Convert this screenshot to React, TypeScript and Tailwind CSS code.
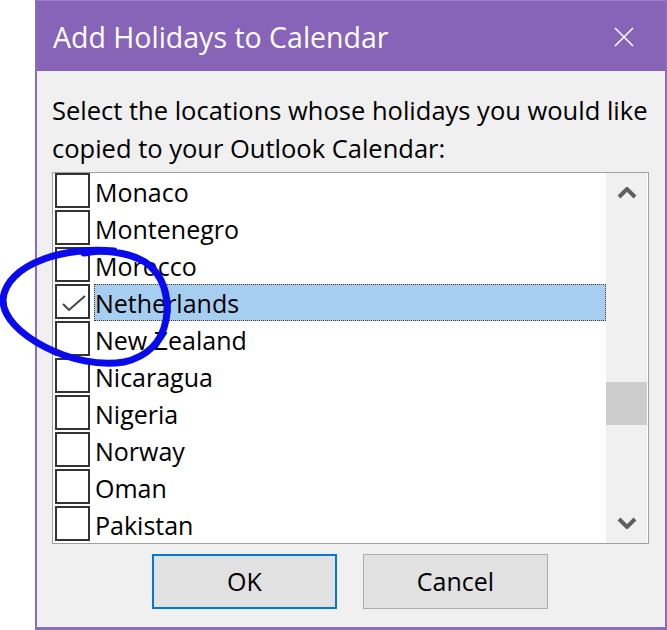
import React from "react";

const countries = [
  "Monaco",
  "Montenegro",
  "Morocco",
  "Netherlands",
  "New Zealand",
  "Nicaragua",
  "Nigeria",
  "Norway",
  "Oman",
  "Pakistan",
];

const font = { fontFamily: '"Open Sans", "Noto Sans", sans-serif' };

const Row: React.FC<{ name: string; checked?: boolean; selected?: boolean }> = ({
  name,
  checked,
  selected,
}) => (
  <div className="flex h-[37px] items-start">
    <div className="ml-[2px] flex h-[35px] w-[35px] shrink-0 items-center justify-center border-2 border-[#333333] bg-white">
      {checked && (
        <svg width="30" height="30" viewBox="0 0 30 30">
          <path d="M5 17 L11 23 L27 9" fill="none" stroke="#444444" strokeWidth="2" />
        </svg>
      )}
    </div>
    <div
      className={
        "ml-[4px] flex h-[37px] flex-1 items-center pt-[3px] text-[25px] text-black " +
        (selected ? "border border-dotted border-[#5c3410] bg-[#a6cef0]" : "border border-transparent")
      }
    >
      {name}
    </div>
  </div>
);

const Scrollbar: React.FC = () => (
  <div className="mr-[1px] flex w-[41px] flex-col bg-[#f0f0f0]">
    <div className="flex h-[40px] items-center justify-center">
      <svg width="20" height="12" viewBox="0 0 20 12">
        <path d="M2 10 L10 2 L18 10" fill="none" stroke="#606060" strokeWidth="4" />
      </svg>
    </div>
    <div className="h-[169px]" />
    <div className="h-[43px] bg-[#cdcdcd]" />
    <div className="flex-1" />
    <div className="flex h-[40px] items-center justify-center">
      <svg width="20" height="12" viewBox="0 0 20 12">
        <path d="M2 2 L10 10 L18 2" fill="none" stroke="#606060" strokeWidth="4" />
      </svg>
    </div>
  </div>
);

export default function App() {
  return (
    <div className="relative h-[630px] w-[667px] overflow-hidden bg-white" style={font}>
      <div className="ml-[35px] flex h-[630px] w-[632px] flex-col border-x-2 border-b-[3px] border-[#8b6bbd] bg-[#f0f0f0]">
        <div className="flex h-[71px] shrink-0 items-center justify-between border-t border-[#9a7fc6] bg-[#8764b8] pl-[16px] pr-[31px] pt-[2px] text-white">
          <span className="text-[28.5px] leading-none">Add Holidays to Calendar</span>
          <svg width="20" height="20" viewBox="0 0 20 20">
            <path d="M1 1 L19 19 M19 1 L1 19" stroke="white" strokeWidth="1.6" />
          </svg>
        </div>
        <div className="pl-[15px] pt-[20px] text-[25.5px] leading-[38px] text-black">
          Select the locations whose holidays you would like
          <br />
          copied to your Outlook Calendar:
        </div>
        <div className="ml-[15px] mt-[5px] flex h-[372px] w-[597px] border border-[#a0a0a0] bg-white">
          <div className="flex-1">
            {countries.map((c) => (
              <Row key={c} name={c} checked={c === "Netherlands"} selected={c === "Netherlands"} />
            ))}
          </div>
          <Scrollbar />
        </div>
        <div className="mt-[10px] flex justify-center gap-[26px] pr-[2px]">
          <button className="flex h-[55px] w-[185px] items-center justify-center border-2 border-[#0078d7] bg-[#e1e1e1] text-[25px] text-black">
            OK
          </button>
          <button className="flex h-[55px] w-[185px] items-center justify-center border border-[#adadad] bg-[#e1e1e1] text-[25px] text-black">
            Cancel
          </button>
        </div>
      </div>
      <svg
        className="pointer-events-none absolute left-0 top-0"
        width="667"
        height="630"
        viewBox="0 0 667 630"
      >
        <path
          d="M84 253 C 102 249, 128 252, 145 262 C 163 274, 170 297, 166 320 C 162 342, 147 357, 124 362 C 100 366, 70 360, 45 347 C 20 334, 3 317, 3 300 C 4 283, 19 268, 44 259 C 65 251, 92 249, 114 251"
          fill="none"
          stroke="#0a0aee"
          strokeWidth="7"
          strokeLinecap="round"
        />
      </svg>
    </div>
  );
}
